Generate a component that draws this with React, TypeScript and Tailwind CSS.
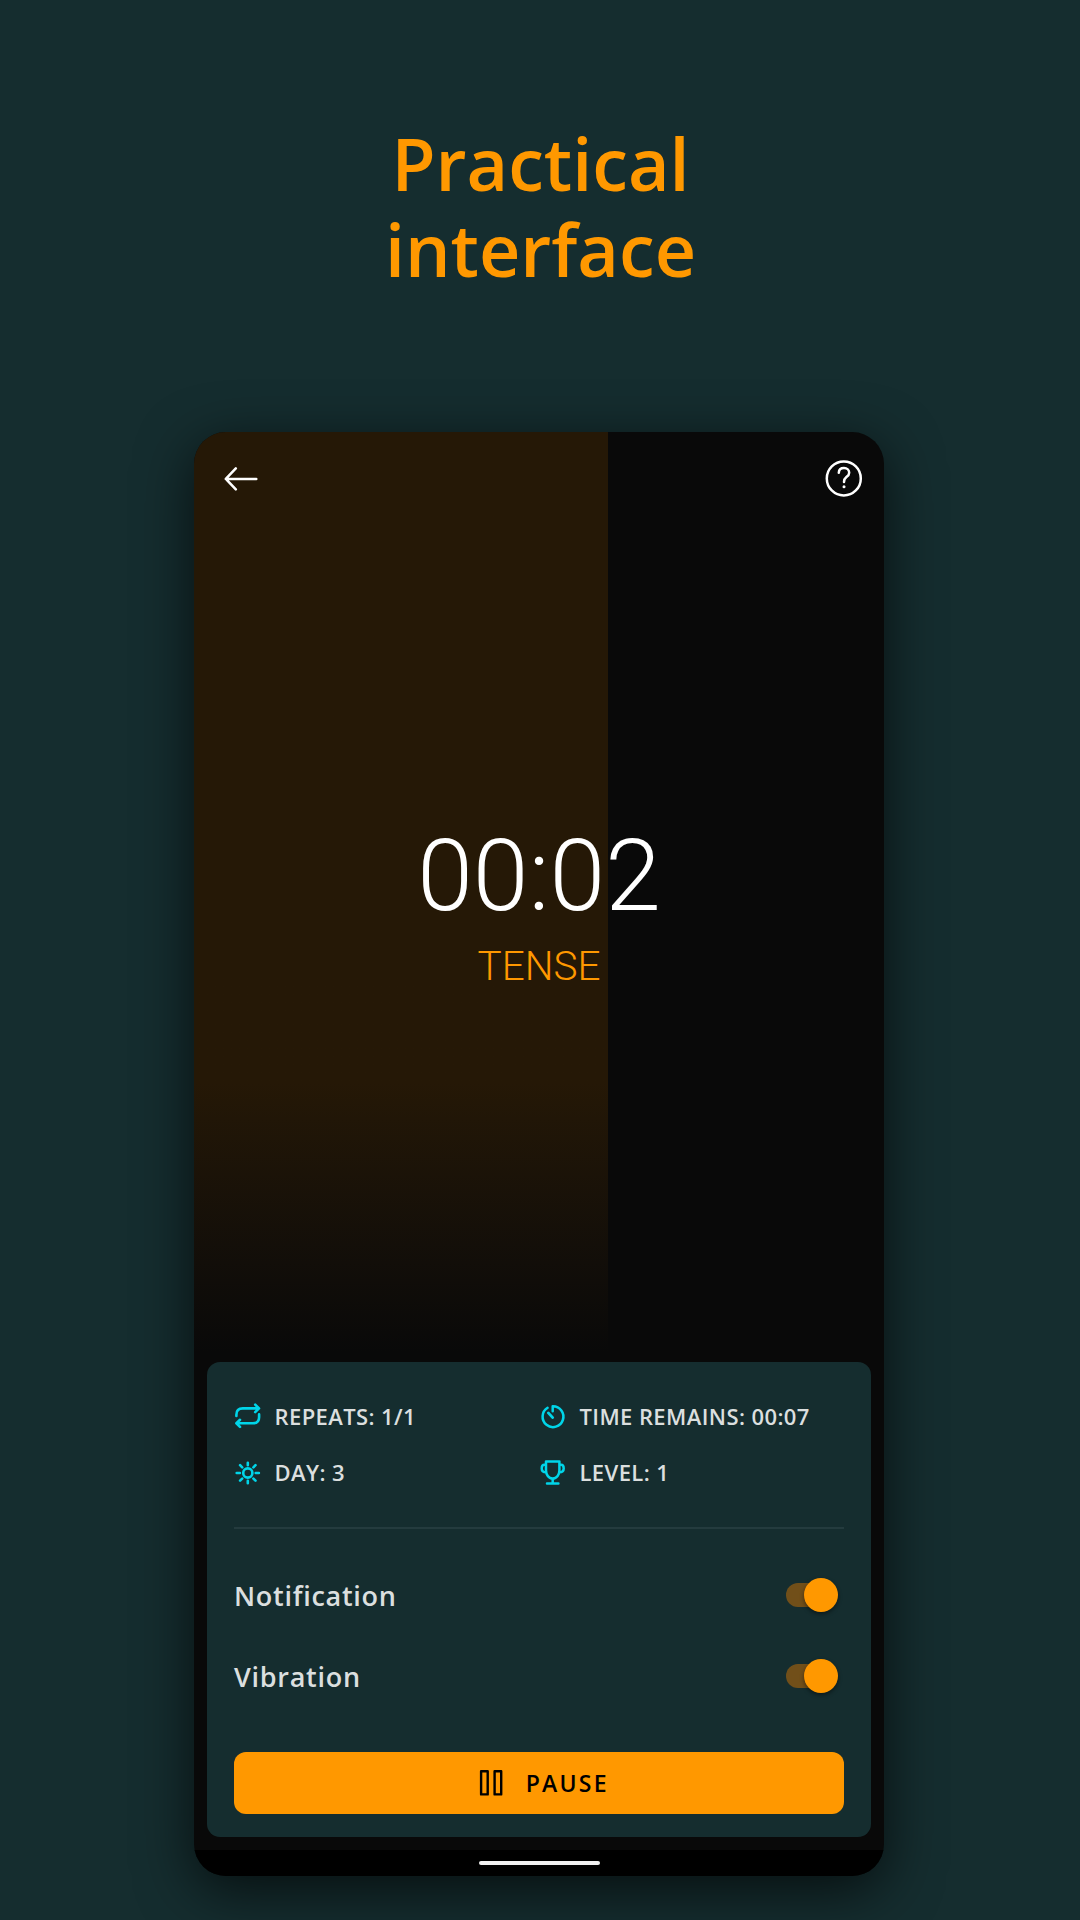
import React from "react";

const iconProps = {
  fill: "none",
  stroke: "currentColor",
  strokeLinecap: "round" as const,
  strokeLinejoin: "round" as const,
};

function BackIcon() {
  return (
    <svg {...iconProps} strokeWidth="2.5" className="h-10 w-10" viewBox="0 0 40 40">
      <path d="M35.3 19.9H5M14.8 9.4L4.8 19.9L14.8 30.4" />
    </svg>
  );
}

function HelpIcon() {
  return (
    <svg {...iconProps} strokeWidth="2.5" className="h-10 w-10" viewBox="0 0 40 40">
      <circle cx="19.8" cy="19.4" r="17" />
      <path d="M14.8 13.8C14.9 10.6 16.9 9.1 20 9.1C23.1 9.1 25.2 11.1 25.2 13.7C25.2 15.9 24 16.9 22.4 18.1C20.7 19.4 20 20.4 20 23.1" />
      <circle cx="20" cy="27.7" r="1.5" fill="currentColor" stroke="none" />
    </svg>
  );
}

function RepeatIcon() {
  return (
    <svg {...iconProps} strokeWidth="2.6" className="h-7 w-7" viewBox="0 0 28 28">
      <path d="M21.2 1.6L25 5.4L21.2 9.2M24.4 5.4H8.8Q2.4 5.4 2.4 11.8V13" />
      <path d="M6 16.8L2.4 20.3L6 23.9M3 20.3H18.8Q25.1 20.3 25.1 14.2V11.4" />
    </svg>
  );
}

function TimerIcon() {
  return (
    <svg {...iconProps} strokeWidth="2.5" className="h-7 w-7" viewBox="0 0 28 28">
      <path d="M13.7 8.2V3.3A10.4 10.4 0 1 1 8.6 4.8" />
      <path d="M9.3 9.9L13.7 14.6" strokeWidth="2.8" />
    </svg>
  );
}

function SunIcon() {
  return (
    <svg {...iconProps} strokeWidth="2.6" className="h-7 w-7" viewBox="0 0 28 28">
      <circle cx="13.8" cy="14" r="4.6" />
      <path d="M13.8 3.7V6.2M13.8 21.8V24.3M2.7 14H5.9M21.7 14H24.9M6.1 6.2L8.2 8.3M19.4 19.6L21.5 21.7M21.5 6.2L19.4 8.3M8.2 19.6L6.1 21.7" />
    </svg>
  );
}

function TrophyIcon() {
  return (
    <svg {...iconProps} strokeWidth="2.5" className="h-7 w-7" viewBox="0 0 28 28">
      <path d="M7 2.5H20.4V11.2C20.4 15.5 17.9 19.6 13.7 19.6C9.5 19.6 7 15.5 7 11.2ZM13.7 19.8V24.2M8 24.4H19.4M6.8 5.8H5.4Q2.7 5.8 2.7 9.5Q2.7 13.3 7.2 13.3M20.6 5.8H22Q24.7 5.8 24.7 9.5Q24.7 13.3 20.2 13.3" />
    </svg>
  );
}

function PauseIcon() {
  return (
    <svg {...iconProps} strokeWidth="2.4" className="h-7 w-6" viewBox="0 0 24 28">
      <rect x="2.1" y="2.2" width="6.6" height="23.2" />
      <rect x="15.6" y="2.2" width="6.6" height="23.2" />
    </svg>
  );
}

function Stat({ icon, label }: { icon: React.ReactNode; label: string }) {
  return (
    <div className="flex h-14 items-center gap-[12.5px] text-[22px] font-semibold leading-7 tracking-[0.4px] text-[#dbdfdf]">
      <span className="text-[#00d5e9]">{icon}</span>
      <span className="whitespace-nowrap pb-0.5">{label}</span>
    </div>
  );
}

function SwitchRow({ label }: { label: string }) {
  return (
    <div className="flex h-[80.5px] items-center justify-between pr-[6px]">
      <span className="pt-[1.5px] text-[27px] font-semibold leading-9 tracking-[0.72px] text-[#dbdfdf]">{label}</span>
      <button
        aria-label={label}
        role="switch"
        aria-checked="true"
        className="flex h-6 w-[52.5px] items-center justify-end rounded-full bg-linear-to-r from-[#714f19] from-[88%] to-transparent to-[88%]"
      >
        <span className="size-[34px] shrink-0 rounded-full bg-[#ff9800] shadow-[0_2px_4px_rgba(0,0,0,0.45)]" />
      </button>
    </div>
  );
}

export default function App() {
  return (
    <main className="flex h-[1920px] w-[1080px] flex-col items-center overflow-hidden bg-[#152d2f] pt-[120px] font-['Open_Sans',sans-serif]">
      <h1 className="h-[312px] pl-px text-center text-[71.8px] font-semibold leading-[86px] text-[#ff9800]">
        Practical
        <br />
        interface
      </h1>
      <section className="mr-[2px] flex h-[1444px] w-[690px] shrink-0 flex-col items-center overflow-hidden rounded-[32px] bg-[#090909] shadow-[0_14px_56px_rgba(0,0,0,0.68)]">
        <div className="flex h-[930px] w-full flex-col bg-linear-to-b from-[#251806] from-[70%] to-[#090909] to-[99%] bg-[length:414px_100%] bg-no-repeat text-white">
          <header className="flex h-[94px] items-center justify-between pl-[27px] pr-5">
            <BackIcon />
            <HelpIcon />
          </header>
          <div className="mt-[298px] text-center font-[Roboto] font-light">
            <div className="text-[100.3px] leading-[104px]">00:02</div>
            <div className="mt-[18px] text-[40.5px] leading-10 text-[#ff9800]">TENSE</div>
          </div>
        </div>
        <div className="flex h-[475px] w-[664px] flex-col rounded-[13px] bg-[#152d2f] px-[27px] pt-[27px]">
          <div className="grid grid-cols-2">
            <Stat icon={<RepeatIcon />} label="REPEATS: 1/1" />
            <Stat icon={<TimerIcon />} label="TIME REMAINS: 00:07" />
            <Stat icon={<SunIcon />} label="DAY: 3" />
            <Stat icon={<TrophyIcon />} label="LEVEL: 1" />
          </div>
          <hr className="my-[26px] border-t-2 border-[#243b3e]" />
          <SwitchRow label="Notification" />
          <SwitchRow label="Vibration" />
          <button className="mt-9 flex h-[62px] items-center justify-center gap-[22.5px] rounded-xl bg-[#ff9800] pl-[10px] text-[23px] font-semibold leading-7 tracking-[2.2px] text-black">
            <PauseIcon />
            <span>PAUSE</span>
          </button>
        </div>
        <div className="mt-[13px] flex h-[26px] w-full items-center justify-center bg-black">
          <div className="h-1 w-[121px] rounded-full bg-[#f1f1f1]" />
        </div>
      </section>
    </main>
  );
}
